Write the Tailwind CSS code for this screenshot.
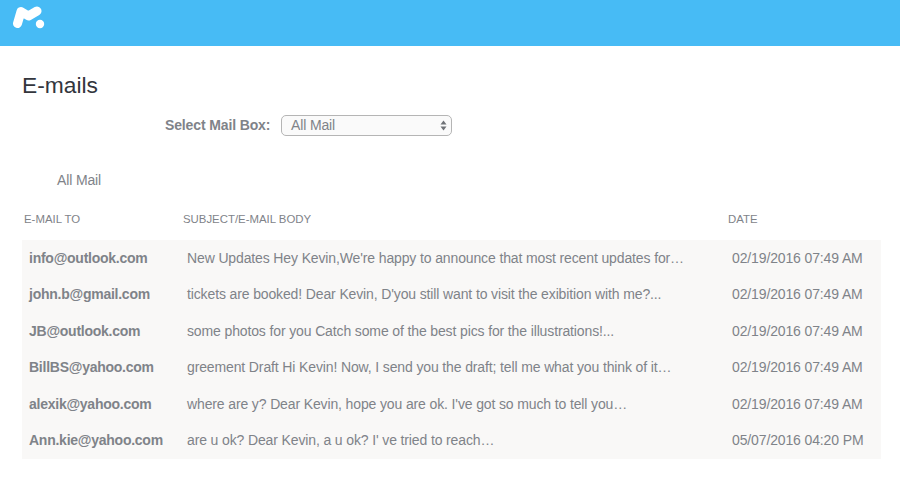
<!DOCTYPE html>
<html lang="en">
<head>
    <meta charset="UTF-8">
    <title>E-mails</title>
    <script src="https://cdn.jsdelivr.net/npm/@tailwindcss/browser@4"></script>
</head>
<body class="bg-white font-['Liberation_Sans',Arial,sans-serif] h-[483px] overflow-hidden">
    <!-- Header -->
    <header class="h-[46px] bg-[#47bbf5] pl-[13px] pt-[5px]">
        <svg width="34" height="25" viewBox="0 0 34 25" class="block">
            <path d="M4.5 18.5 L8 6.5 L15.5 11 L24 6" fill="none" stroke="#fff" stroke-width="9" stroke-linecap="round" stroke-linejoin="round"/>
            <circle cx="27" cy="19" r="4.2" fill="#fff"/>
        </svg>
    </header>

    <main class="pl-[22px] pr-[19px]">
        <h1 class="text-[22.8px] leading-[26px] text-[#33363d] mt-[26px]">E-mails</h1>

        <div class="flex items-center mt-[17px] ml-[143px]">
            <label class="text-[14px] tracking-[-0.13px] font-bold text-[#7f8389] w-[116px]">Select Mail Box:</label>
            <div class="w-[171px] h-[21px] border border-[#b5b5b5] rounded-[5px] bg-[#fafafa] flex items-center justify-between pl-[9px] pr-[4px] text-[14px] tracking-[-0.13px] text-[#7f8389]">
                <span>All Mail</span>
                <svg width="7" height="11" viewBox="0 0 7 11">
                    <path d="M3.5 0.5 L6.5 4.5 L0.5 4.5 Z M3.5 10.5 L0.5 6.5 L6.5 6.5 Z" fill="#6f7277"/>
                </svg>
            </div>
        </div>

        <p class="text-[14px] tracking-[-0.13px] leading-[16px] text-[#7f8389] ml-[35px] mt-[36px]">All Mail</p>

        <!-- Column heads -->
        <div class="flex text-[11.4px] leading-[14px] text-[#7f8389] mt-[24px] pl-[2px]">
            <span class="w-[159px]">E-MAIL TO</span>
            <span class="w-[545px]">SUBJECT/E-MAIL BODY</span>
            <span>DATE</span>
        </div>

        <!-- Rows -->
        <div class="mt-[14px] bg-[#f9f8f7] text-[14px] tracking-[-0.13px] text-[#7f8389]">
            <div class="flex items-center h-[36.5px] pl-[7px]">
                <span class="w-[158px] tracking-[-0.25px] font-bold">info@outlook.com</span>
                <span class="w-[545px]">New Updates Hey Kevin,We're happy to announce that most recent updates for…</span>
                <span>02/19/2016 07:49 AM</span>
            </div>
            <div class="flex items-center h-[36.5px] pl-[7px]">
                <span class="w-[158px] tracking-[-0.25px] font-bold">john.b@gmail.com</span>
                <span class="w-[545px]">tickets are booked! Dear Kevin, D'you still want to visit the exibition with me?...</span>
                <span>02/19/2016 07:49 AM</span>
            </div>
            <div class="flex items-center h-[36.5px] pl-[7px]">
                <span class="w-[158px] tracking-[-0.25px] font-bold">JB@outlook.com</span>
                <span class="w-[545px]">some photos for you Catch some of the best pics for the illustrations!...</span>
                <span>02/19/2016 07:49 AM</span>
            </div>
            <div class="flex items-center h-[36.5px] pl-[7px]">
                <span class="w-[158px] tracking-[-0.25px] font-bold">BillBS@yahoo.com</span>
                <span class="w-[545px]">greement Draft Hi Kevin! Now, I send you the draft; tell me what you think of it…</span>
                <span>02/19/2016 07:49 AM</span>
            </div>
            <div class="flex items-center h-[36.5px] pl-[7px]">
                <span class="w-[158px] tracking-[-0.25px] font-bold">alexik@yahoo.com</span>
                <span class="w-[545px]">where are y? Dear Kevin, hope you are ok. I've got so much to tell you…</span>
                <span>02/19/2016 07:49 AM</span>
            </div>
            <div class="flex items-center h-[36.5px] pl-[7px]">
                <span class="w-[158px] tracking-[-0.25px] font-bold">Ann.kie@yahoo.com</span>
                <span class="w-[545px]">are u ok? Dear Kevin, a u ok? I' ve tried to reach…</span>
                <span>05/07/2016 04:20 PM</span>
            </div>
        </div>
    </main>
</body>
</html>
